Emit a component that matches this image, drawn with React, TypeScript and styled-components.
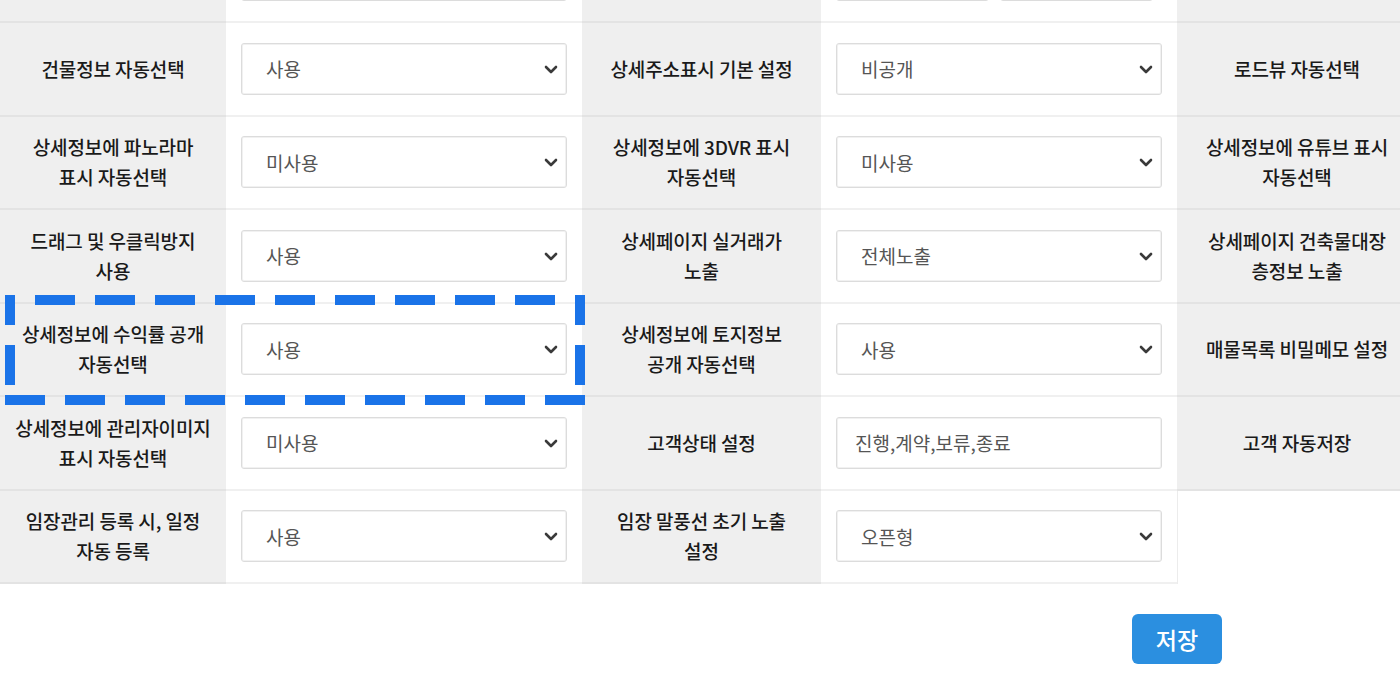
import React from "react";
import styled, { createGlobalStyle } from "styled-components";

const Global = createGlobalStyle`
  html, body { margin: 0; padding: 0; overflow: hidden; background: #ffffff; }
  body { font-family: "Noto Sans CJK KR", "Noto Sans", sans-serif; }
  * { box-sizing: border-box; }
`;

const Page = styled.div`
  position: relative;
  width: 1400px;
  height: 700px;
  overflow: hidden;
`;

const Table = styled.div`
  display: grid;
  grid-template-columns: 226px 356px 239px 356px 240px 356px;
  grid-auto-rows: 93.5px;
  width: 1773px;
  margin-top: -70.5px;
`;

const Label = styled.div`
  display: flex;
  align-items: center;
  justify-content: center;
  text-align: center;
  background: #efefef;
  border-bottom: 2px solid #e3e3e3;
  color: #1a1a1a;
  font-size: 19px;
  font-weight: 500;
  line-height: 30px;
  white-space: nowrap;
  letter-spacing: -0.1px;
`;

const Value = styled.div<{ $pr?: number }>`
  display: flex;
  align-items: center;
  gap: 11px;
  background: #ffffff;
  border-bottom: 2px solid #f0f0f0;
  padding: 0 ${(p) => p.$pr ?? 15}px 0 15px;
`;

const Blank = styled.div<{ $edge?: boolean }>`
  background: #ffffff;
  border-left: ${(p) => (p.$edge ? "1px solid #ececec" : "none")};
`;

const SelectWrap = styled.div`
  position: relative;
  flex: 1;
  height: 52px;
`;

const Select = styled.select`
  appearance: none;
  -webkit-appearance: none;
  width: 100%;
  height: 100%;
  border: 1px solid #dcdcdc;
  border-radius: 3px;
  background: #fff;
  padding: 0 40px 0 24px;
  font-family: "Noto Sans CJK KR", "Noto Sans", sans-serif;
  font-size: 19px;
  color: #555;
  box-shadow: inset 0 0 0 1px #f1f1f1;
  outline: none;
`;

const Chevron = styled.svg`
  position: absolute;
  right: 9px;
  top: 50%;
  width: 14px;
  height: 9px;
  margin-top: -4px;
  pointer-events: none;
`;

const TextInput = styled.input`
  flex: 1;
  min-width: 0;
  height: 52px;
  border: 1px solid #dcdcdc;
  border-radius: 3px;
  box-shadow: inset 0 0 0 1px #f1f1f1;
  padding: 0 18px;
  font-family: "Noto Sans CJK KR", "Noto Sans", sans-serif;
  font-size: 19px;
  color: #555;
  outline: none;
`;

const Footer = styled.div`
  display: flex;
  padding: 30px 0 0 1132px;
`;

const SaveButton = styled.button`
  width: 90px;
  height: 50px;
  border: none;
  border-radius: 6px;
  background: #2b8fe0;
  color: #fff;
  font-family: "Noto Sans CJK KR", "Noto Sans", sans-serif;
  font-size: 23px;
  font-weight: 500;
  cursor: pointer;
`;

const Highlight = styled.svg`
  position: absolute;
  left: 0;
  top: 0;
  width: 1400px;
  height: 700px;
  pointer-events: none;
`;

const Dropdown: React.FC<{ value: string }> = ({ value }) => (
  <SelectWrap>
    <Select defaultValue={value}>
      <option>{value}</option>
    </Select>
    <Chevron viewBox="0 0 14 9">
      <polyline
        points="2,2 7,7 12,2"
        fill="none"
        stroke="#3a3a3a"
        strokeWidth="2.6"
        strokeLinecap="round"
        strokeLinejoin="round"
      />
    </Chevron>
  </SelectWrap>
);

const Lines: React.FC<{ lines: string[] }> = ({ lines }) => (
  <span>
    {lines.map((l, i) => (
      <React.Fragment key={i}>
        {i > 0 && <br />}
        {l}
      </React.Fragment>
    ))}
  </span>
);

type Cell =
  | { kind: "label"; lines: string[] }
  | { kind: "select"; value: string }
  | { kind: "input"; value: string }
  | { kind: "pair" }
  | { kind: "blank"; edge?: boolean };

const rows: Cell[][] = [
  [
    { kind: "label", lines: ["지도 기본 위치", "자동 설정"] },
    { kind: "select", value: "사용" },
    { kind: "label", lines: ["지도 좌표", "설정"] },
    { kind: "pair" },
    { kind: "label", lines: ["지도 자동선택"] },
    { kind: "select", value: "사용" },
  ],
  [
    { kind: "label", lines: ["건물정보 자동선택"] },
    { kind: "select", value: "사용" },
    { kind: "label", lines: ["상세주소표시 기본 설정"] },
    { kind: "select", value: "비공개" },
    { kind: "label", lines: ["로드뷰 자동선택"] },
    { kind: "select", value: "사용" },
  ],
  [
    { kind: "label", lines: ["상세정보에 파노라마", "표시 자동선택"] },
    { kind: "select", value: "미사용" },
    { kind: "label", lines: ["상세정보에 3DVR 표시", "자동선택"] },
    { kind: "select", value: "미사용" },
    { kind: "label", lines: ["상세정보에 유튜브 표시", "자동선택"] },
    { kind: "select", value: "미사용" },
  ],
  [
    { kind: "label", lines: ["드래그 및 우클릭방지", "사용"] },
    { kind: "select", value: "사용" },
    { kind: "label", lines: ["상세페이지 실거래가", "노출"] },
    { kind: "select", value: "전체노출" },
    { kind: "label", lines: ["상세페이지 건축물대장", "층정보 노출"] },
    { kind: "select", value: "사용" },
  ],
  [
    { kind: "label", lines: ["상세정보에 수익률 공개", "자동선택"] },
    { kind: "select", value: "사용" },
    { kind: "label", lines: ["상세정보에 토지정보", "공개 자동선택"] },
    { kind: "select", value: "사용" },
    { kind: "label", lines: ["매물목록 비밀메모 설정"] },
    { kind: "select", value: "사용" },
  ],
  [
    { kind: "label", lines: ["상세정보에 관리자이미지", "표시 자동선택"] },
    { kind: "select", value: "미사용" },
    { kind: "label", lines: ["고객상태 설정"] },
    { kind: "input", value: "진행,계약,보류,종료" },
    { kind: "label", lines: ["고객 자동저장"] },
    { kind: "select", value: "사용" },
  ],
  [
    { kind: "label", lines: ["임장관리 등록 시, 일정", "자동 등록"] },
    { kind: "select", value: "사용" },
    { kind: "label", lines: ["임장 말풍선 초기 노출", "설정"] },
    { kind: "select", value: "오픈형" },
    { kind: "blank", edge: true },
    { kind: "blank" },
  ],
];

const renderCell = (c: Cell, key: string) => {
  switch (c.kind) {
    case "label":
      return (
        <Label key={key}>
          <Lines lines={c.lines} />
        </Label>
      );
    case "select":
      return (
        <Value key={key}>
          <Dropdown value={c.value} />
        </Value>
      );
    case "input":
      return (
        <Value key={key}>
          <TextInput defaultValue={c.value} />
        </Value>
      );
    case "pair":
      return (
        <Value key={key} $pr={24}>
          <TextInput defaultValue="" />
          <TextInput defaultValue="" />
        </Value>
      );
    case "blank":
      return <Blank key={key} $edge={c.edge} />;
  }
};

export default function App() {
  return (
    <Page>
      <Global />
      <Table>{rows.map((r, ri) => r.map((c, ci) => renderCell(c, `${ri}-${ci}`)))}</Table>
      <Footer>
        <SaveButton type="button">저장</SaveButton>
      </Footer>
      <Highlight viewBox="0 0 1400 700">
        <g stroke="#1a73e8" strokeWidth="10" fill="none">
          <line x1="35" y1="300" x2="555" y2="300" strokeDasharray="40 20" />
          <line x1="5" y1="400" x2="585" y2="400" strokeDasharray="40 20" />
          <line x1="10" y1="295" x2="10" y2="385" strokeDasharray="30 20 40 20" />
          <line x1="580" y1="295" x2="580" y2="385" strokeDasharray="30 20 40 20" />
        </g>
      </Highlight>
    </Page>
  );
}
